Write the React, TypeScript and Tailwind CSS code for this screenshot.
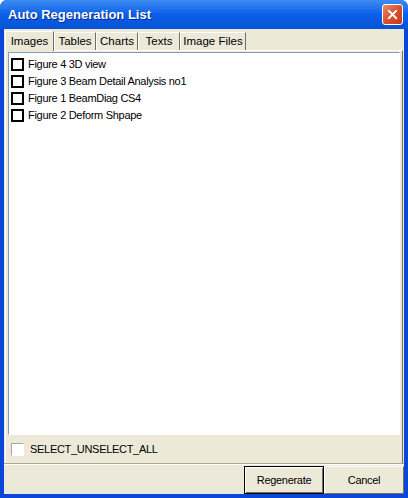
import { X } from "lucide-react";

const tabs = [
  { label: "Images", w: "w-[49px]" },
  { label: "Tables", w: "w-[42px]" },
  { label: "Charts", w: "w-[42px]" },
  { label: "Texts", w: "w-[42px]" },
  { label: "Image Files", w: "w-[66px]" },
];
const figures = [
  "Figure 4 3D view",
  "Figure 3 Beam Detail Analysis no1",
  "Figure 1 BeamDiag CS4",
  "Figure 2 Deform Shpape",
];

export default function App() {
  return (
    <div
      className="flex h-[498px] w-[408px] flex-col overflow-hidden rounded-t-[7px] bg-[#0a46d8] text-[11px] tracking-[-0.3px] text-black"
      style={{ fontFamily: '"Liberation Sans", Arial, sans-serif' }}
    >
      {/* title bar */}
      <div className="flex h-[29px] shrink-0 items-center justify-between bg-gradient-to-b from-[#3d8cf5] via-[#0a5fe8] to-[#0653d6] pl-[8px] pr-[5px]">
        <span className="text-[13px] font-bold tracking-normal text-white [text-shadow:1px_1px_0_#0a2a8a]">
          Auto Regeneration List
        </span>
        <div className="flex h-[21px] w-[21px] items-center justify-center rounded-[3px] border border-white bg-gradient-to-br from-[#e9896b] via-[#d9522c] to-[#c23a14]">
          <X size={15} strokeWidth={3} className="text-white" />
        </div>
      </div>

      {/* client */}
      <div className="mx-[4px] mb-[4px] flex flex-1 flex-col bg-[#ece9d8]">
        <div className="flex flex-1 flex-col px-[1px] pt-[2px]">
          <div className="flex h-[19px] items-end">
            {tabs.map((t, i) => (
              <div
                key={t.label}
                className={
                  i === 0
                    ? `relative z-10 -mb-px flex h-[20px] items-center justify-center border border-b-0 border-t-white border-l-white border-r-[#716f64] bg-[#ece9d8] text-[11.5px] tracking-normal ${t.w}`
                    : `flex h-[18px] items-center justify-center border border-b-0 border-t-white border-l-white border-r-[#716f64] text-[11.5px] tracking-normal ${t.w}`
                }
              >
                {t.label}
              </div>
            ))}
          </div>
          <div className="flex flex-1 flex-col border border-t-white border-l-white border-r-[#716f64] border-b-0 px-[2px] pt-[1px]">
            <div className="flex-1 border border-t-[#7f9db9] border-l-[#7f9db9] border-r-white border-b-white bg-white pt-[3px] pl-[2px]">
              {figures.map((f) => (
                <div key={f} className="flex h-[17px] items-center gap-[4px]">
                  <span className="h-[13px] w-[13px] border-2 border-black bg-white" />
                  <span>{f}</span>
                </div>
              ))}
            </div>
            <div className="flex h-[28px] items-center gap-[6px] pl-[3px]">
              <span className="h-[13px] w-[13px] border border-t-[#aca899] border-l-[#aca899] border-r-white border-b-white bg-white" />
              <span>SELECT_UNSELECT_ALL</span>
            </div>
          </div>
        </div>
        <div className="flex h-[31px] shrink-0 justify-end border-t border-t-[#aca899] pt-[2px] shadow-[inset_0_1px_0_#fff]">
          <button className="h-[28px] w-[80px] border border-black bg-[#ece9d8] shadow-[inset_1px_1px_0_#fff,inset_-1px_-1px_0_#716f64]">
            Regenerate
          </button>
          <button className="h-[28px] w-[80px] border border-t-white border-l-white border-r-[#716f64] border-b-[#716f64] bg-[#ece9d8]">
            Cancel
          </button>
        </div>
      </div>
    </div>
  );
}
